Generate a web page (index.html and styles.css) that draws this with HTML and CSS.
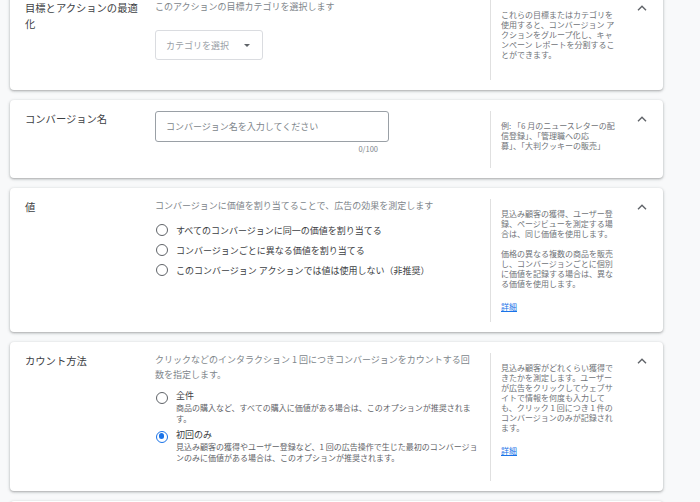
FILE: index.html
```html
<!DOCTYPE html>
<html lang="ja">
<head>
<meta charset="utf-8">
<title>コンバージョン アクション</title>
<link rel="stylesheet" href="styles.css">
</head>
<body>
<div class="page">

  <section class="card">
    <div class="label">目標とアクションの最適化</div>
    <div class="main">
      <div class="desc">このアクションの目標カテゴリを選択します</div>
      <div class="select">
        <span class="select-text">カテゴリを選択</span>
        <span class="caret"></span>
      </div>
    </div>
    <div class="help">
      <div class="help-text">これらの目標またはカテゴリを使用すると、コンバージョン アクションをグループ化し、キャンペーン レポートを分割することができます。</div>
      <div class="toggle"><svg width="10" height="6" viewBox="0 0 10 6"><polyline points="1,5.3 5,1.3 9,5.3" fill="none" stroke="#5f6368" stroke-width="1.4"/></svg></div>
    </div>
  </section>

  <section class="card">
    <div class="label">コンバージョン名</div>
    <div class="main">
      <div class="field">コンバージョン名を入力してください</div>
      <div class="counter">0/100</div>
    </div>
    <div class="help">
      <div class="help-text">例: 「6 月のニュースレターの配信登録」、「管理職への応<br>募」、「大判クッキーの販売」</div>
      <div class="toggle"><svg width="10" height="6" viewBox="0 0 10 6"><polyline points="1,5.3 5,1.3 9,5.3" fill="none" stroke="#5f6368" stroke-width="1.4"/></svg></div>
    </div>
  </section>

  <section class="card">
    <div class="label">値</div>
    <div class="main">
      <div class="desc">コンバージョンに価値を割り当てることで、広告の効果を測定します</div>
      <div class="opt"><span class="radio"></span>すべてのコンバージョンに同一の価値を割り当てる</div>
      <div class="opt"><span class="radio"></span>コンバージョンごとに異なる価値を割り当てる</div>
      <div class="opt"><span class="radio"></span>このコンバージョン アクションでは値は使用しない（非推奨）</div>
    </div>
    <div class="help">
      <div class="help-text">
        <p class="para">見込み顧客の獲得、ユーザー登録、ページビューを測定する場合は、同じ価値を使用します。</p>
        <p class="para">価格の異なる複数の商品を販売し、コンバージョンごとに個別に価値を記録する場合は、異なる価値を使用します。</p>
        <a class="more" href="#">詳細</a>
      </div>
      <div class="toggle"><svg width="10" height="6" viewBox="0 0 10 6"><polyline points="1,5.3 5,1.3 9,5.3" fill="none" stroke="#5f6368" stroke-width="1.4"/></svg></div>
    </div>
  </section>

  <section class="card">
    <div class="label">カウント方法</div>
    <div class="main">
      <div class="desc desc-wrap">クリックなどのインタラクション 1 回につきコンバージョンをカウントする回数を指定します。</div>
      <div class="opt2">
        <span class="radio"></span>
        <div class="opt2-body">
          <div class="opt2-title">全件</div>
          <div class="opt2-sub">商品の購入など、すべての購入に価値がある場合は、このオプションが推奨されます。</div>
        </div>
      </div>
      <div class="opt2">
        <span class="radio checked"></span>
        <div class="opt2-body">
          <div class="opt2-title">初回のみ</div>
          <div class="opt2-sub">見込み顧客の獲得やユーザー登録など、1 回の広告操作で生じた最初のコンバージョンのみに価値がある場合は、このオプションが推奨されます。</div>
        </div>
      </div>
    </div>
    <div class="help">
      <div class="help-text">
        <p class="para">見込み顧客がどれくらい獲得できたかを測定します。ユーザーが広告をクリックしてウェブサイトで情報を何度も入力しても、クリック 1 回につき 1 件のコンバージョンのみが記録されます。</p>
        <a class="more" href="#">詳細</a>
      </div>
      <div class="toggle"><svg width="10" height="6" viewBox="0 0 10 6"><polyline points="1,5.3 5,1.3 9,5.3" fill="none" stroke="#5f6368" stroke-width="1.4"/></svg></div>
    </div>
  </section>

  <section class="card card-next"></section>

</div>
</body>
</html>
```

FILE: styles.css
```css
html, body {
  margin: 0;
  padding: 0;
  background: #f8f9fa;
}

body {
  font-family: "Noto Sans CJK JP", "Noto Sans", sans-serif;
  color: #3c4043;
}

.page {
  padding-left: 10px;
  margin-top: -11px;
}

.card {
  width: 653px;
  box-sizing: border-box;
  background: #fff;
  border-radius: 4px;
  box-shadow: 0 1px 2px 0 rgba(60, 64, 67, 0.3), 0 1px 3px 1px rgba(60, 64, 67, 0.12);
  margin-bottom: 10px;
  display: flex;
  padding: 11px 0 10px 15px;
}

.card-next {
  min-height: 80px;
}

.label {
  width: 118px;
  margin-right: 12px;
  font-size: 10.3px;
  line-height: 16px;
  color: #3c4043;
}

.main {
  flex: 1;
  padding: 0 10px 14px 0;
}

.desc {
  font-size: 9px;
  line-height: 15px;
  color: #80868b;
  margin-top: -1px;
  margin-bottom: 7px;
  max-width: 318px;
}

.select {
  width: 108px;
  height: 30px;
  box-sizing: border-box;
  border: 1px solid #dadce0;
  border-radius: 3px;
  margin-top: 16px;
  margin-bottom: 6px;
  display: flex;
  align-items: center;
  padding: 0 12px 0 10px;
}

.select-text {
  font-size: 9px;
  color: #9aa0a6;
}

.caret {
  margin-left: auto;
  width: 0;
  height: 0;
  border-left: 3px solid transparent;
  border-right: 3px solid transparent;
  border-top: 3px solid #5f6368;
}

.field {
  width: 234px;
  height: 31px;
  box-sizing: border-box;
  border: 1px solid #9aa0a6;
  border-radius: 3px;
  display: flex;
  align-items: center;
  padding-left: 10px;
  font-size: 9px;
  color: #80868b;
}

.counter {
  width: 234px;
  box-sizing: border-box;
  text-align: right;
  padding-right: 11px;
  margin-top: 2px;
  font-size: 7.5px;
  line-height: 10px;
  color: #80868b;
}

.opt {
  display: flex;
  align-items: center;
  height: 20px;
  font-size: 9px;
  color: #3c4043;
}

.radio {
  flex: none;
  width: 12px;
  height: 12px;
  box-sizing: border-box;
  border: 1.4px solid #5f6368;
  border-radius: 50%;
  margin: 0 8px 0 1px;
  position: relative;
}

.radio.checked {
  border-color: #1a73e8;
}

.radio.checked::after {
  content: "";
  position: absolute;
  left: 1.8px;
  top: 1.8px;
  width: 5.6px;
  height: 5.6px;
  border-radius: 50%;
  background: #1a73e8;
}

.opt2 {
  display: flex;
  align-items: flex-start;
  margin-bottom: 4px;
}

.opt2 .radio {
  margin-top: 2.5px;
}

.opt2-body {
  flex: 1;
}

.opt2-title {
  font-size: 9px;
  line-height: 13px;
  color: #3c4043;
}

.opt2-sub {
  font-size: 8px;
  line-height: 11px;
  color: #5f6368;
}

.help {
  width: 173px;
  flex: none;
  box-sizing: border-box;
  border-left: 1px solid #e0e0e0;
  padding: 10px 0 10px 10px;
  display: flex;
  align-items: flex-start;
}

.help-text {
  width: 116px;
  flex: none;
  font-size: 8px;
  line-height: 10px;
  color: #6f7378;
}

.para {
  margin: 0 0 10px 0;
}

.more {
  display: inline-block;
  margin-top: 3px;
  color: #1a73e8;
  text-decoration: underline;
}

.toggle {
  flex: 1;
  display: flex;
  justify-content: center;
  padding-left: 4px;
  margin-top: -5px;
}

.toggle svg {
  display: block;
}
```
